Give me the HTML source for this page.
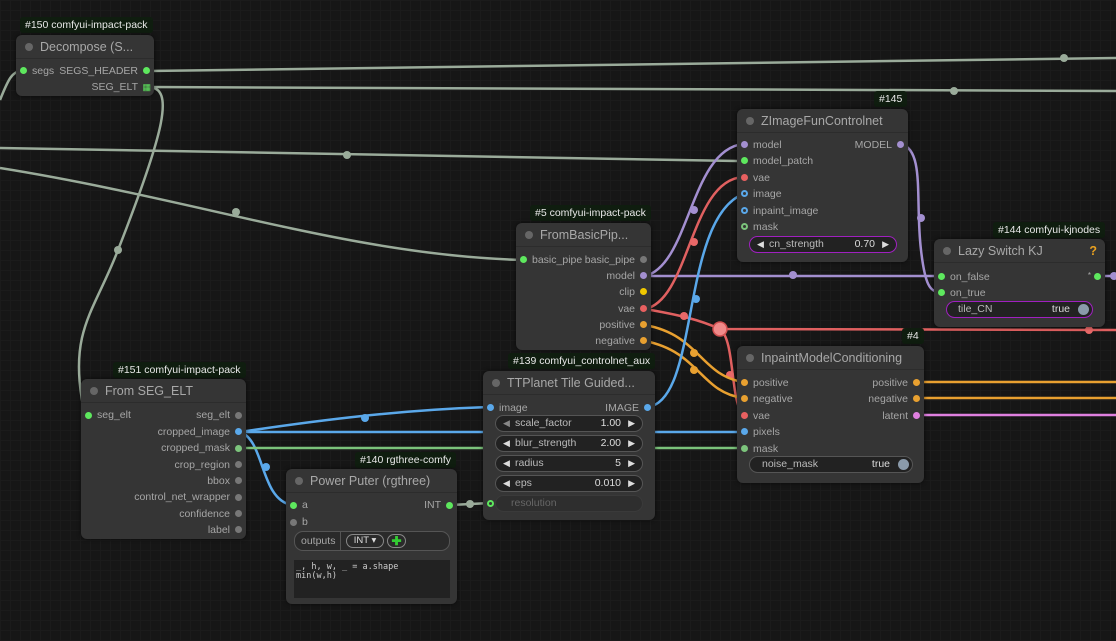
<!DOCTYPE html>
<html><head><meta charset="utf-8"><style>
*{box-sizing:border-box;margin:0;padding:0}
body{width:1116px;height:641px;overflow:hidden;background:#161616;font-family:"Liberation Sans",sans-serif;position:relative;
background-image:linear-gradient(#1b1b1b 1px,transparent 1px),linear-gradient(90deg,#1b1b1b 1px,transparent 1px);background-size:10px 10px}
.n{position:absolute;background:#353535;border-radius:6px;box-shadow:0 0 4px rgba(0,0,0,.6)}
.t{position:absolute;left:0;right:0;top:0;height:24px;border-bottom:1px solid #2c2c2c;color:#a8a8a8;font-size:12.5px;line-height:24px;padding-left:24px;white-space:nowrap}
.t:before{content:"";position:absolute;left:9px;top:8px;width:8px;height:8px;border-radius:50%;background:#666}
.b{position:absolute;background:#0f1d0f;color:#e8e8e8;font-size:10.5px;line-height:16px;padding:0 5px;border-radius:3px;white-space:nowrap}
.l{position:absolute;font-size:10.5px;color:#a6a6a6;line-height:12px;white-space:nowrap}
.r{text-align:right}
.d{position:absolute;width:7px;height:7px;border-radius:50%}
.w{position:absolute;height:17px;border:1px solid #555;border-radius:9px;background:#222;font-size:10.5px;color:#bbb;line-height:15px}
.w .a{position:absolute;left:7px;color:#ddd;font-size:9px}
.w .z{position:absolute;right:7px;color:#ddd;font-size:9px}
.w .k{position:absolute;left:19px}
.w .v{position:absolute;right:21px;color:#ddd}
</style></head><body>
<svg width="1116" height="641" style="position:absolute;left:0;top:0" fill="none" stroke-width="2.5">
<g stroke="#9aab9a">
<path d="M148 71 L1116 58"/><path d="M148 87 L1116 91"/>
<path d="M148 87 C175 87 165 130 118 250 C95 310 70 330 82 400 C84 412 86 415 87 415"/>
<path d="M0 148 L737 161"/><path d="M0 168 C200 200 350 255 522 260"/>
<path d="M0 100 C8 80 12 71 22 71"/>
<path d="M451 505 L490 503"/>
</g>
<g fill="#9aab9a"><circle cx="1064" cy="58" r="4"/><circle cx="954" cy="91" r="4"/><circle cx="118" cy="250" r="4"/><circle cx="347" cy="155" r="4"/><circle cx="236" cy="212" r="4"/><circle cx="470" cy="504" r="4"/></g>
<g stroke="#a38fd0">
<path d="M645 276 L940 276"/><path d="M645 276 C690 265 690 150 743 144"/>
<path d="M901 144 C925 150 915 200 921 250 C925 285 930 292 940 292"/>
<path d="M1105 276 L1116 276"/>
</g>
<g fill="#a38fd0"><circle cx="793" cy="275" r="4"/><circle cx="694" cy="210" r="4"/><circle cx="921" cy="218" r="4"/><circle cx="1114" cy="276" r="4"/></g>
<g stroke="#e06060">
<path d="M645 309 C690 300 690 180 743 177"/>
<path d="M645 309 C680 315 700 320 720 329 L1116 330"/>
<path d="M720 329 C735 340 730 400 743 415"/>
</g>
<g fill="#e86868"><circle cx="694" cy="242" r="4"/><circle cx="684" cy="316" r="4"/><circle cx="730" cy="375" r="4"/><circle cx="1089" cy="330" r="4"/><circle cx="720" cy="329" r="7" fill="#f08a8a" stroke="#d05050" stroke-width="1.5"/></g>
<g stroke="#e8a030">
<path d="M645 325 C700 335 700 375 743 382"/><path d="M645 341 C700 352 700 392 743 398"/>
<path d="M917 382 L1116 382"/><path d="M917 398 L1116 398"/>
</g>
<g fill="#e8a030"><circle cx="694" cy="353" r="4"/><circle cx="694" cy="370" r="4"/></g>
<path d="M917 415 L1116 415" stroke="#e080e0"/>
<g stroke="#5aa8ea">
<path d="M648 407 C700 400 680 220 743 194"/>
<path d="M240 432 C320 420 400 410 489 407"/><path d="M240 432 L743 432"/>
<path d="M240 432 C265 440 260 500 292 505"/>
</g>
<g fill="#5aa8ea"><circle cx="696" cy="299" r="4"/><circle cx="365" cy="418" r="4"/><circle cx="266" cy="467" r="4"/></g>
<path d="M240 448 L743 448" stroke="#7cc47c"/>
</svg>

<div class="b" style="left:20px;top:17px">#150 comfyui-impact-pack</div>
<div class="n" style="left:16px;top:35px;width:138px;height:61px"><div class="t">Decompose (S...</div>
<div class="d" style="left:4px;top:32px;background:#5ee85e"></div><div class="l" style="left:16px;top:30px">segs</div>
<div class="l r" style="right:16px;top:30px">SEGS_HEADER</div><div class="d" style="right:4px;top:32px;background:#5ee85e"></div>
<div class="l r" style="right:16px;top:46px">SEG_ELT</div><div class="l" style="right:3px;top:46px;color:#5ee85e;font-size:9px">▦</div></div>

<div class="b" style="left:874px;top:91px">#145</div>
<div class="n" style="left:737px;top:109px;width:171px;height:153px"><div class="t">ZImageFunControlnet</div>
<div class="d" style="left:4px;top:32px;background:#a38fd0"></div><div class="l" style="left:16px;top:30px">model</div>
<div class="l r" style="right:16px;top:30px">MODEL</div><div class="d" style="right:4px;top:32px;background:#a38fd0"></div>
<div class="d" style="left:4px;top:48px;background:#5ee85e"></div><div class="l" style="left:16px;top:46px">model_patch</div>
<div class="d" style="left:4px;top:65px;background:#e86060"></div><div class="l" style="left:16px;top:63px">vae</div>
<div class="d" style="left:4px;top:81px;border:2px solid #5aa8ea"></div><div class="l" style="left:16px;top:79px">image</div>
<div class="d" style="left:4px;top:98px;border:2px solid #5aa8ea"></div><div class="l" style="left:16px;top:96px">inpaint_image</div>
<div class="d" style="left:4px;top:114px;border:2px solid #7cc47c"></div><div class="l" style="left:16px;top:112px">mask</div>
<div class="w" style="left:12px;top:127px;width:148px;border-color:#a020c0"><span class="a">◀</span><span class="k">cn_strength</span><span class="v">0.70</span><span class="z">▶</span></div></div>

<div class="b" style="left:530px;top:205px">#5 comfyui-impact-pack</div>
<div class="n" style="left:516px;top:223px;width:135px;height:127px"><div class="t">FromBasicPip...</div>
<div class="d" style="left:4px;top:33px;background:#5ee85e"></div><div class="l" style="left:16px;top:31px">basic_pipe</div>
<div class="l r" style="right:16px;top:31px">basic_pipe</div><div class="d" style="right:4px;top:33px;background:#777"></div>
<div class="l r" style="right:16px;top:47px">model</div><div class="d" style="right:4px;top:49px;background:#a38fd0"></div>
<div class="l r" style="right:16px;top:63px">clip</div><div class="d" style="right:4px;top:65px;background:#f0c800"></div>
<div class="l r" style="right:16px;top:80px">vae</div><div class="d" style="right:4px;top:82px;background:#e86060"></div>
<div class="l r" style="right:16px;top:96px">positive</div><div class="d" style="right:4px;top:98px;background:#e8a030"></div>
<div class="l r" style="right:16px;top:112px">negative</div><div class="d" style="right:4px;top:114px;background:#e8a030"></div></div>

<div class="b" style="left:993px;top:222px">#144 comfyui-kjnodes</div>
<div class="n" style="left:934px;top:239px;width:171px;height:88px"><div class="t">Lazy Switch KJ<span style="position:absolute;right:8px;color:#e8a020;font-weight:bold">?</span></div>
<div class="d" style="left:4px;top:34px;background:#5ee85e"></div><div class="l" style="left:16px;top:32px">on_false</div>
<div class="l" style="right:14px;top:31px;font-size:8px">*</div><div class="d" style="right:4px;top:34px;background:#5ee85e"></div>
<div class="d" style="left:4px;top:50px;background:#5ee85e"></div><div class="l" style="left:16px;top:48px">on_true</div>
<div class="w" style="left:12px;top:62px;width:147px;border-color:#a020c0"><span class="k" style="left:11px">tile_CN</span><span class="v" style="right:22px">true</span><span style="position:absolute;right:3px;top:2px;width:11px;height:11px;border-radius:50%;background:#8a9aaa"></span></div></div>

<div class="b" style="left:902px;top:328px">#4</div>
<div class="n" style="left:737px;top:346px;width:187px;height:137px"><div class="t">InpaintModelConditioning</div>
<div class="d" style="left:4px;top:33px;background:#e8a030"></div><div class="l" style="left:16px;top:31px">positive</div>
<div class="l r" style="right:16px;top:31px">positive</div><div class="d" style="right:4px;top:33px;background:#e8a030"></div>
<div class="d" style="left:4px;top:49px;background:#e8a030"></div><div class="l" style="left:16px;top:47px">negative</div>
<div class="l r" style="right:16px;top:47px">negative</div><div class="d" style="right:4px;top:49px;background:#e8a030"></div>
<div class="d" style="left:4px;top:66px;background:#e86060"></div><div class="l" style="left:16px;top:64px">vae</div>
<div class="l r" style="right:16px;top:64px">latent</div><div class="d" style="right:4px;top:66px;background:#e080e0"></div>
<div class="d" style="left:4px;top:82px;background:#5aa8ea"></div><div class="l" style="left:16px;top:80px">pixels</div>
<div class="d" style="left:4px;top:99px;background:#7cc47c"></div><div class="l" style="left:16px;top:97px">mask</div>
<div class="w" style="left:12px;top:110px;width:164px"><span class="k" style="left:12px">noise_mask</span><span class="v" style="right:22px">true</span><span style="position:absolute;right:3px;top:2px;width:11px;height:11px;border-radius:50%;background:#8a9aaa"></span></div></div>

<div class="b" style="left:508px;top:353px">#139 comfyui_controlnet_aux</div>
<div class="n" style="left:483px;top:371px;width:172px;height:149px"><div class="t">TTPlanet Tile Guided...</div>
<div class="d" style="left:4px;top:33px;background:#5aa8ea"></div><div class="l" style="left:16px;top:31px">image</div>
<div class="l r" style="right:16px;top:31px">IMAGE</div><div class="d" style="right:4px;top:33px;background:#5aa8ea"></div>
<div class="w" style="left:12px;top:44px;width:148px"><span class="a" style="color:#888">◀</span><span class="k">scale_factor</span><span class="v">1.00</span><span class="z">▶</span></div>
<div class="w" style="left:12px;top:64px;width:148px"><span class="a">◀</span><span class="k">blur_strength</span><span class="v">2.00</span><span class="z">▶</span></div>
<div class="w" style="left:12px;top:84px;width:148px"><span class="a">◀</span><span class="k">radius</span><span class="v">5</span><span class="z">▶</span></div>
<div class="w" style="left:12px;top:104px;width:148px"><span class="a">◀</span><span class="k">eps</span><span class="v">0.010</span><span class="z">▶</span></div>
<div class="d" style="left:4px;top:129px;border:2px solid #5ee85e"></div>
<div class="w" style="left:12px;top:124px;width:148px;border-color:#3a3a3a;background:#2e2e2e;color:#666"><span class="k" style="left:15px">resolution</span></div></div>

<div class="b" style="left:113px;top:362px">#151 comfyui-impact-pack</div>
<div class="n" style="left:81px;top:379px;width:165px;height:160px"><div class="t">From SEG_ELT</div>
<div class="d" style="left:4px;top:33px;background:#5ee85e"></div><div class="l" style="left:16px;top:30px">seg_elt</div>
<div class="l r" style="right:16px;top:30px">seg_elt</div><div class="d" style="right:4px;top:33px;background:#777"></div>
<div class="l r" style="right:16px;top:47px">cropped_image</div><div class="d" style="right:4px;top:49px;background:#5aa8ea"></div>
<div class="l r" style="right:16px;top:63px">cropped_mask</div><div class="d" style="right:4px;top:66px;background:#7cc47c"></div>
<div class="l r" style="right:16px;top:80px">crop_region</div><div class="d" style="right:4px;top:82px;background:#777"></div>
<div class="l r" style="right:16px;top:96px">bbox</div><div class="d" style="right:4px;top:98px;background:#777"></div>
<div class="l r" style="right:16px;top:112px">control_net_wrapper</div><div class="d" style="right:4px;top:115px;background:#777"></div>
<div class="l r" style="right:16px;top:129px">confidence</div><div class="d" style="right:4px;top:131px;background:#777"></div>
<div class="l r" style="right:16px;top:145px">label</div><div class="d" style="right:4px;top:147px;background:#777"></div></div>

<div class="b" style="left:355px;top:452px">#140 rgthree-comfy</div>
<div class="n" style="left:286px;top:469px;width:171px;height:135px"><div class="t">Power Puter (rgthree)</div>
<div class="d" style="left:4px;top:33px;background:#5ee85e"></div><div class="l" style="left:16px;top:30px">a</div>
<div class="l r" style="right:16px;top:30px">INT</div><div class="d" style="right:4px;top:33px;background:#5ee85e"></div>
<div class="d" style="left:4px;top:50px;background:#777"></div><div class="l" style="left:16px;top:47px">b</div>
<div style="position:absolute;left:8px;top:62px;width:156px;height:20px;border:1px solid #555;border-radius:9px;background:#2a2a2a">
<span class="l" style="left:6px;top:3px">outputs</span><span style="position:absolute;left:45px;top:0;bottom:0;border-left:1px solid #555"></span>
<span style="position:absolute;left:51px;top:2px;width:38px;height:14px;border:1px solid #888;border-radius:7px;font-size:9.5px;color:#ddd;text-align:center;line-height:12px">INT ▾</span>
<span style="position:absolute;left:92px;top:2px;width:19px;height:14px;border:1px solid #888;border-radius:7px;color:#3c3;font-size:12px;text-align:center;line-height:12px;font-weight:bold">✚</span></div>
<div style="position:absolute;left:8px;top:91px;width:156px;height:38px;background:#222;font-family:'DejaVu Sans Mono',monospace;font-size:8.5px;color:#ccc;padding:3px 2px;line-height:9px">_, h, w, _ = a.shape<br>min(w,h)</div></div>
</body></html>
